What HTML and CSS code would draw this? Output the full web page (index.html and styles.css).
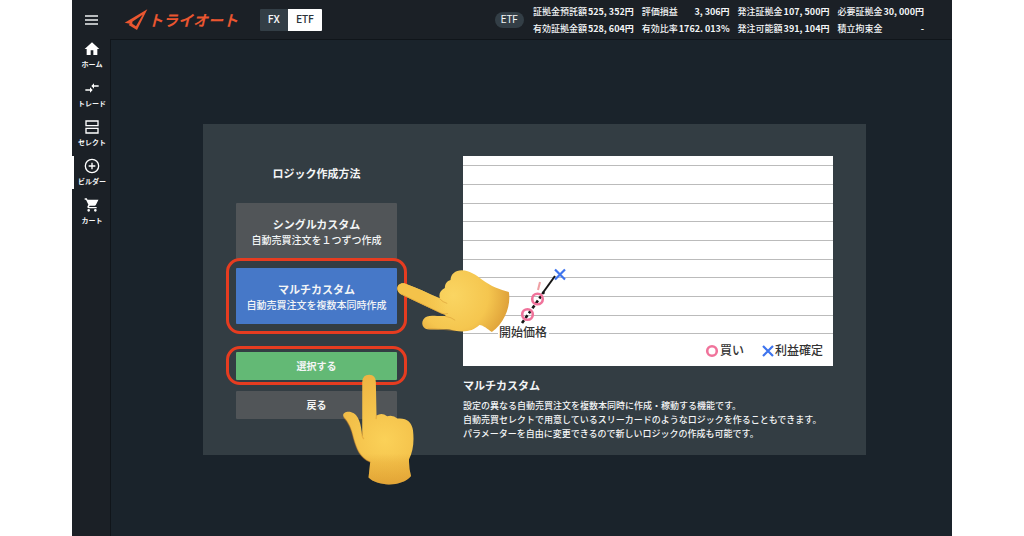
FILE: index.html
```html
<!DOCTYPE html>
<html lang="ja">
<head>
<meta charset="utf-8">
<title>トライオート</title>
<link rel="stylesheet" href="styles.css">
</head>
<body>
<div class="app">
  <header class="header">
    <button class="menu" type="button" aria-label="メニュー">
      <svg width="14" height="12" viewBox="0 0 14 12"><path d="M0 2h13M0 6h13M0 10h13" stroke="#eef0f1" stroke-width="1.6"/></svg>
    </button>
    <a class="logo" href="#">
      <svg width="24" height="22" viewBox="178 28 72 66"><path fill="#ea5630" fill-rule="evenodd" d="M248 29 217 91 192 76 196 72 180 69ZM234 45 203 66 203 72 214 80Z"/></svg>
      <span>トライオート</span>
    </a>
    <div class="toggle">
      <button type="button">FX</button>
      <button type="button" class="on">ETF</button>
    </div>
    <span class="pill">ETF</span>
    <div class="stats">
      <dl><div><dt>証拠金預託額</dt><dd>525, 352円</dd></div><div><dt>有効証拠金額</dt><dd>528, 604円</dd></div></dl>
      <dl><div><dt>評価損益</dt><dd>3, 306円</dd></div><div><dt>有効比率</dt><dd>1762. 013%</dd></div></dl>
      <dl><div><dt>発注証拠金</dt><dd>107, 500円</dd></div><div><dt>発注可能額</dt><dd>391, 104円</dd></div></dl>
      <dl><div><dt>必要証拠金</dt><dd>30, 000円</dd></div><div><dt>積立拘束金</dt><dd>-</dd></div></dl>
    </div>
  </header>
  <div class="body">
    <nav class="nav">
      <a href="#"><svg viewBox="0 0 24 24"><path fill="#fff" d="M10 21v-7h4v7h6v-9h3L12 2 1 12h3v9z"/></svg>ホーム</a>
      <a href="#"><svg viewBox="0 0 24 24"><path fill="#fff" d="M9 14H2v2h7v3l4-4-4-4zm6-1v-3h7V8h-7V5l-4 4z"/></svg>トレード</a>
      <a href="#"><svg viewBox="0 0 24 24"><path fill="none" stroke="#fff" stroke-width="2" d="M3 3h18v7H3zM3 14h18v7H3z"/></svg>セレクト</a>
      <a href="#" class="active"><svg viewBox="0 0 24 24"><g fill="none" stroke="#fff" stroke-width="2"><circle cx="12" cy="12" r="10"/><path d="M12 7v10M7 12h10"/></g></svg>ビルダー</a>
      <a href="#"><svg viewBox="0 0 24 24"><path fill="#fff" d="M7 18a2 2 0 1 0 0 4 2 2 0 0 0 0-4zM1 2v2h2l3.600 7.590-1.350 2.450C4.520 15.370 5.480 17 7 17h12v-2H7.420l1.130-2h7.450c.75 0 1.410-.41 1.750-1.030L21.700 4H5.210l-.94-2zm16 16a2 2 0 1 0 0 4 2 2 0 0 0 0-4z"/></svg>カート</a>
    </nav>
    <main class="main">
      <section class="panel">
        <div class="choices">
          <h1>ロジック作成方法</h1>
          <button type="button" class="card"><strong>シングルカスタム</strong><span>自動売買注文を１つずつ作成</span></button>
          <div class="marked marked-card">
            <button type="button" class="card selected"><strong>マルチカスタム</strong><span>自動売買注文を複数本同時作成</span></button>
            <svg class="hand hand-left" width="115" height="64" viewBox="528 56 344 192" aria-hidden="true">
              <defs>
                <radialGradient id="palm" gradientUnits="userSpaceOnUse" cx="700" cy="135" r="190"><stop offset="0" stop-color="#fad562"/><stop offset=".55" stop-color="#f5c64f"/><stop offset="1" stop-color="#d79532"/></radialGradient>
                <linearGradient id="finger" gradientUnits="userSpaceOnUse" x1="600" y1="0" x2="680" y2="0"><stop offset="0" stop-color="#f4c24a"/><stop offset="1" stop-color="#f4c24a" stop-opacity="0"/></linearGradient>
              </defs>
              <path fill="url(#palm)" d="M552 99C592 114 626 130 659 144C655 130 661 119 674 113C674 100 681 92 691 89C692 72 705 60 725 60C750 61 768 75 786 88C812 108 840 117 866 125C873 163 855 216 815 245C803 237 790 225 778 224C759 242 733 247 704 241C674 233 650 240 621 237C607 234 602 219 610 207C621 189 647 199 676 197C677 194 670 192 662 189L542 132C523 119 532 96 552 99Z"/>
              <path fill="url(#finger)" d="M552 99C592 114 626 130 659 144L690 165 690 195 662 189L542 132C523 119 532 96 552 99Z"/>
              <path fill="none" stroke="#d3942f" stroke-width="3" stroke-linecap="round" opacity=".5" d="M545 132 662 188Q674 193 682 190M659 146Q668 156 680 159M676 198Q695 201 704 209M624 235Q655 235 704 241"/>
            </svg>
          </div>
          <div class="marked marked-action">
            <button type="button" class="action go">選択する</button>
            <svg class="hand hand-up" width="73" height="113" viewBox="366 114 220 338" aria-hidden="true">
              <defs>
                <radialGradient id="fist" gradientUnits="userSpaceOnUse" cx="495" cy="315" r="205"><stop offset="0" stop-color="#fbd158"/><stop offset=".5" stop-color="#f4c24b"/><stop offset="1" stop-color="#edb443"/></radialGradient>
                <linearGradient id="wrist" x1="0" y1="0" x2="0" y2="1"><stop offset=".72" stop-color="#d48b20" stop-opacity="0"/><stop offset=".8" stop-color="#d48b20" stop-opacity=".2"/><stop offset="1" stop-color="#cf8520" stop-opacity=".45"/></linearGradient>
              </defs>
              <path fill="url(#fist)" d="M427 140Q428 118 448 118Q468 119 468 140L470 241Q486 230 502 243Q520 238 533 250Q574 246 580 286C584 321 580 348 568 373Q567 398 574 423C548 456 473 456 446 428L451 381C419 367 410 341 401 310C394 278 384 260 372 247C363 234 380 226 394 231C416 236 424 267 427 304Z"/>
              <path fill="url(#wrist)" d="M427 140Q428 118 448 118Q468 119 468 140L470 241Q486 230 502 243Q520 238 533 250Q574 246 580 286C584 321 580 348 568 373Q567 398 574 423C548 456 473 456 446 428L451 381C419 367 410 341 401 310C394 278 384 260 372 247C363 234 380 226 394 231C416 236 424 267 427 304Z"/>
              <path fill="none" stroke="#d18a27" stroke-width="4" stroke-linecap="round" opacity=".4" d="M427 290Q425 305 431 310M470 240 469 250M372 247C384 260 394 278 401 310C410 341 419 367 451 381"/>
            </svg>
          </div>
          <button type="button" class="action">戻る</button>
        </div>
        <div class="detail">
          <svg class="chart" viewBox="0 0 370 210" role="img" aria-label="マルチカスタム">
            <path class="grid" d="M0 9.500h370M0 28.500h370M0 47.500h370M0 65.500h370M0 84.500h370M0 103.500h370M0 121.500h370M0 140.500h370M0 159.500h370M0 177.500h370"/>
            <path fill="#fff" d="M35 170h51v15H35z"/>
            <path stroke="#151515" stroke-width="2.600" fill="none" stroke-dasharray="3.500 2.500" d="M59 167 81 136"/>
            <path stroke="#151515" stroke-width="2" fill="none" d="M79 138 92 120"/>
            <path stroke="#efa0a4" stroke-width="2" d="M75 134 77 126"/>
            <g fill="none" stroke="#f0739b" stroke-width="2.600"><circle cx="64.500" cy="158.500" r="5.300"/><circle cx="74.500" cy="143" r="5.300"/><circle cx="249" cy="195" r="4.800"/></g>
            <path fill="none" stroke="#3e74ee" stroke-width="2.200" d="M92 113.500 102 123.500M102 113.500 92 123.500M300 190 310 200M310 190 300 200"/>
            <text x="36" y="181">開始価格</text>
            <text x="257" y="199">買い</text>
            <text x="312" y="199">利益確定</text>
          </svg>
          <h2>マルチカスタム</h2>
          <p>設定の異なる自動売買注文を複数本同時に作成・稼動する機能です。<br>自動売買セレクトで用意しているスリーカードのようなロジックを作ることもできます。<br>パラメーターを自由に変更できるので新しいロジックの作成も可能です。</p>
        </div>
      </section>
    </main>
  </div>
</div>
</body>
</html>
```
FILE: styles.css
```css
* { box-sizing: border-box; }
body {
  margin: 0;
  background: #fff;
  color: #f3f5f6;
  font-family: "Noto Sans CJK JP", sans-serif;
}
button {
  border: 0;
  padding: 0;
  margin: 0;
  background: none;
  color: inherit;
  font: inherit;
}
a { color: inherit; text-decoration: none; }
svg { display: block; }
h1, h2, p, dl, dd { margin: 0; }

.app {
  display: flex;
  flex-direction: column;
  min-height: 100vh;
  margin: 0 72px;
  background: #1b2026;
}

.header {
  display: flex;
  align-items: center;
  height: 39px;
  padding: 0 28px 0 13px;
}
.logo {
  display: flex;
  align-items: center;
  margin-left: 25px;
  color: #ea5630;
  font-size: 15px;
  font-weight: 700;
  font-style: italic;
}
.toggle {
  display: flex;
  margin-left: 22px;
  font: 500 10px/22px Roboto, sans-serif;
  background: #333e46;
  border-radius: 1px;
  overflow: hidden;
}
.toggle button { width: 28px; }
.toggle .on { width: 34px; background: #fff; color: #2c343a; }
.pill {
  margin-left: auto;
  padding: 0 6px;
  border-radius: 8px;
  background: #333e46;
  font: 10px/16px Roboto, sans-serif;
}
.stats {
  display: flex;
  gap: 8px;
  margin-left: 9px;
  font-size: 9px;
  line-height: 17px;
  white-space: nowrap;
}
.stats div { display: flex; justify-content: space-between; gap: 1px; }
.stats dt { font-weight: 500; }
.stats dd { font-weight: 700; }

.body { display: flex; flex: 1; }
.nav {
  display: flex;
  flex-direction: column;
  gap: 6px;
  width: 38px;
}
.nav a {
  display: flex;
  flex-direction: column;
  align-items: center;
  gap: 2px;
  height: 33px;
  padding-top: 2px;
  border-left: 2px solid transparent;
  font-size: 7px;
  font-weight: 700;
  line-height: 10px;
  white-space: nowrap;
}
.nav .active { border-color: #fff; }
.nav svg { width: 16px; height: 16px; }

.main {
  flex: 1;
  min-width: 0;
  padding: 84px 86px 80px 92px;
  border-top: 1px solid #10151a;
  border-left: 1px solid #10151a;
  background: #1a232b;
}
.panel {
  display: grid;
  grid-template-columns: 161px minmax(0, 1fr);
  gap: 66px;
  padding: 32px 33px 14px;
  background: #333d43;
}
.choices { display: flex; flex-direction: column; }
.choices h1 {
  padding: 8px 0 21px;
  font-size: 11px;
  line-height: 18px;
  text-align: center;
}
.card {
  display: flex;
  flex-direction: column;
  align-items: center;
  justify-content: center;
  width: 100%;
  height: 56px;
  padding-top: 2px;
  border-radius: 1px;
  background: #515558;
  font-size: 10px;
  font-weight: 500;
  line-height: 16px;
  white-space: nowrap;
}
.card strong { font-size: 11px; font-weight: 700; }
.card.selected { background: #4678c8; }
.action {
  width: 100%;
  height: 28px;
  border-radius: 1px;
  background: #515558;
  font-size: 10px;
  font-weight: 700;
}
.action.go { background: #63b975; }

/* Highlight rings and pointing hands laid over the buttons */
.marked { position: relative; }
.marked-card { margin: 9px 0 27px; }
.marked-action { margin-bottom: 11px; }
.marked::after {
  content: "";
  position: absolute;
  inset: -10px;
  border: 3px solid #e63c20;
  border-radius: 14px;
  pointer-events: none;
}
.marked-action::after { inset: -5px -10px; }
.hand { position: absolute; z-index: 2; pointer-events: none; }
.hand-left { left: 160px; top: 1px; }
.hand-up { left: 106px; top: 22px; }

.chart { width: 100%; background: #fff; }
.chart .grid { stroke: #bbb; fill: none; }
.chart text { fill: #333; font-size: 12px; font-weight: 500; }
.detail h2 { padding-top: 10px; font-size: 11px; line-height: 18px; }
.detail p { padding-top: 5px; font-size: 9px; font-weight: 500; line-height: 14px; }
```
